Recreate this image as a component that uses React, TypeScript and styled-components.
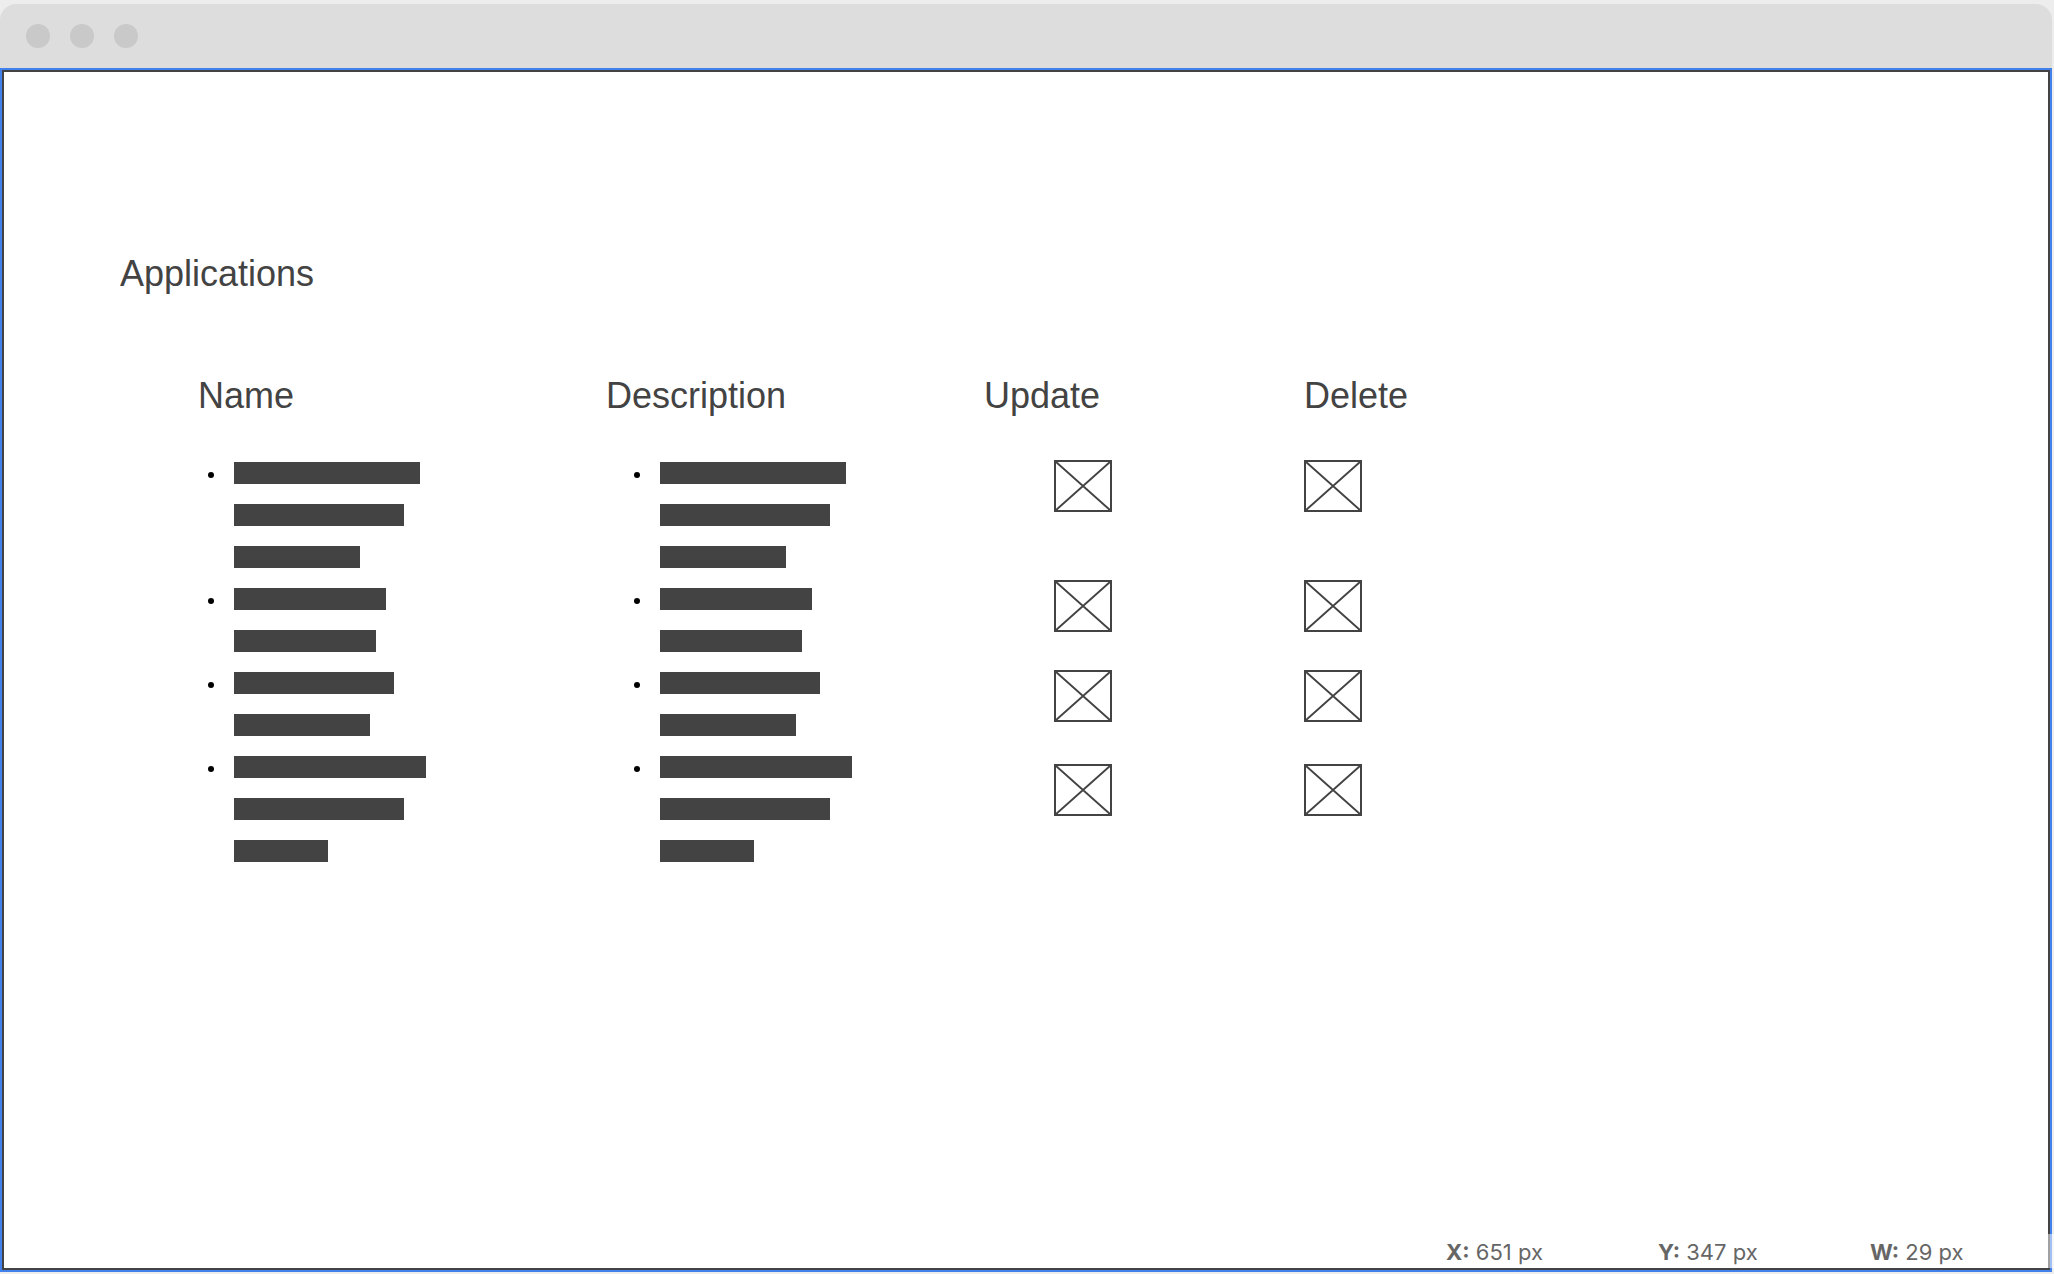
import React from "react";
import styled, { createGlobalStyle } from "styled-components";

const ink = "#434343";
const backdrop = "#ededed";
const selection = "#4280eb";

const GlobalStyle = createGlobalStyle`
  *, *::before, *::after { box-sizing: border-box; }
  body {
    margin: 0;
    background: ${backdrop};
    color: ${ink};
    font-family: "Liberation Sans", Arial, sans-serif;
  }
`;

const Page = styled.div`
  position: relative;
  display: flex;
  flex-direction: column;
  min-height: 100vh;
  padding: 4px 2px 2px 0;
`;

const TitleBar = styled.header`
  display: flex;
  align-items: center;
  gap: 20px;
  height: 64px;
  padding-left: 26px;
  border-radius: 16px 16px 0 0;
  background: #dddddd;
`;

const WindowDot = styled.span`
  width: 24px;
  height: 24px;
  border-radius: 50%;
  background: #c9c9c9;
`;

const Frame = styled.div`
  display: flex;
  flex: 1;
  border: 2px solid ${selection};
`;

const Canvas = styled.main`
  flex: 1;
  padding: 182px 0 80px 116px;
  border: 2px solid ${ink};
  background: #ffffff;
`;

const Title = styled.h1`
  margin: 0 0 82px;
  font-size: 36px;
  font-weight: 400;
  line-height: 40px;
`;

const Columns = styled.div`
  display: grid;
  grid-template-columns: 408fr 378fr 320fr 744fr;
  padding-left: 78px;
`;

const ColumnTitle = styled.h2`
  margin: 0 0 44px;
  font-size: 36px;
  font-weight: 400;
  line-height: 40px;
`;

const List = styled.ul<{ $indent: number }>`
  display: flex;
  flex-direction: column;
  gap: 20px;
  margin: 0;
  padding: 2px 0 0 ${(p) => p.$indent}px;
  list-style: none;
`;

const Item = styled.li`
  display: flex;
  gap: 20px;

  &::before {
    content: "";
    width: 6px;
    height: 6px;
    margin-top: 10px;
    border-radius: 50%;
    background: #000000;
  }
`;

const Lines = styled.div`
  display: flex;
  flex-direction: column;
  gap: 20px;
`;

const Line = styled.div<{ $width: number }>`
  width: ${(p) => p.$width}px;
  height: 22px;
  background: ${ink};
`;

const Actions = styled.div<{ $indent: number }>`
  display: flex;
  flex-direction: column;
  align-items: flex-start;
  padding-left: ${(p) => p.$indent}px;
`;

const ActionButton = styled.button<{ $after: number }>`
  width: 58px;
  height: 52px;
  margin: 0 0 ${(p) => p.$after}px;
  padding: 0;
  border: 2px solid ${ink};
  background: transparent;
  cursor: pointer;

  svg {
    display: block;
    width: 100%;
    height: 100%;
  }
`;

const StatusBar = styled.footer`
  position: absolute;
  right: 0;
  bottom: 6px;
  display: flex;
  height: 34px;
  padding-left: 32px;
  background: rgba(255, 255, 255, 0.5);
  color: #666666;
  font-family: Inter, sans-serif;
  font-size: 22px;
  line-height: 36px;
`;

const Reading = styled.span`
  width: 212px;
  padding-left: 28px;
  white-space: nowrap;
`;

const Key = styled.b`
  font-weight: 700;
`;

const items = [
  [186, 170, 126],
  [152, 142],
  [160, 136],
  [192, 170, 94],
];

const textColumns = [
  { title: "Name", indent: 10 },
  { title: "Description", indent: 28 },
];

const actionColumns = [
  { title: "Update", indent: 70 },
  { title: "Delete", indent: 0 },
];

const actionGaps = [68, 38, 42, 0];

const readings = [
  ["X:", "651 px"],
  ["Y:", "347 px"],
  ["W:", "29 px"],
];

export default function App() {
  return (
    <>
      <GlobalStyle />
      <Page>
        <TitleBar>
          <WindowDot />
          <WindowDot />
          <WindowDot />
        </TitleBar>
        <Frame>
          <Canvas>
            <Title>Applications</Title>
            <Columns>
              {textColumns.map((column) => (
                <section key={column.title}>
                  <ColumnTitle>{column.title}</ColumnTitle>
                  <List $indent={column.indent}>
                    {items.map((lines, i) => (
                      <Item key={i}>
                        <Lines>
                          {lines.map((width, j) => (
                            <Line key={j} $width={width} />
                          ))}
                        </Lines>
                      </Item>
                    ))}
                  </List>
                </section>
              ))}
              {actionColumns.map((column) => (
                <section key={column.title}>
                  <ColumnTitle>{column.title}</ColumnTitle>
                  <Actions $indent={column.indent}>
                    {actionGaps.map((gap, i) => (
                      <ActionButton
                        key={i}
                        type="button"
                        $after={gap}
                        aria-label={`${column.title} application ${i + 1}`}
                      >
                        <svg viewBox="0 0 54 48" aria-hidden="true">
                          <path d="M0 0 54 48M54 0 0 48" stroke={ink} strokeWidth="2" />
                        </svg>
                      </ActionButton>
                    ))}
                  </Actions>
                </section>
              ))}
            </Columns>
          </Canvas>
        </Frame>
        <StatusBar>
          {readings.map(([key, value]) => (
            <Reading key={key}>
              <Key>{key}</Key> {value}
            </Reading>
          ))}
        </StatusBar>
      </Page>
    </>
  );
}
